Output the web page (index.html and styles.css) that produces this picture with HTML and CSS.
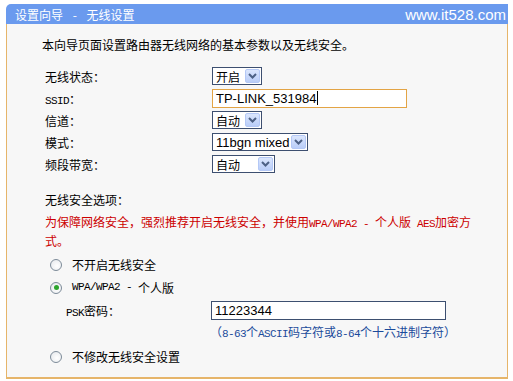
FILE: index.html
```html
<!DOCTYPE html>
<html>

<head>
    <meta charset="utf-8">
    <title>设置向导 - 无线设置</title>
    <link rel="stylesheet" href="styles.css">
</head>

<body>
    <div class="wrap">
        <div class="bar">
            <span class="title">设置向导 - 无线设置</span>
            <span class="site">www.it528.com</span>
        </div>

        <div class="panel">
            <p class="intro">本向导页面设置路由器无线网络的基本参数以及无线安全。</p>

            <div class="form">
                <div class="row">
                    <span class="label">无线状态：</span>
                    <span class="select w-on"><span class="val">开启</span><span class="arrow"><svg width="9" height="6" viewBox="0 0 9 6"><path d="M1 1 L4.5 4.5 L8 1" fill="none" stroke="#4d6185" stroke-width="2"/></svg></span></span>
                </div>
                <div class="row">
                    <span class="label"><span class="en">SSID</span>：</span>
                    <span class="input ssid">TP-LINK_531984<span class="caret"></span></span>
                </div>
                <div class="row">
                    <span class="label">信道：</span>
                    <span class="select w-on"><span class="val">自动</span><span class="arrow"><svg width="9" height="6" viewBox="0 0 9 6"><path d="M1 1 L4.5 4.5 L8 1" fill="none" stroke="#4d6185" stroke-width="2"/></svg></span></span>
                </div>
                <div class="row">
                    <span class="label">模式：</span>
                    <span class="select w-mode"><span class="val latin">11bgn mixed</span><span class="arrow"><svg width="9" height="6" viewBox="0 0 9 6"><path d="M1 1 L4.5 4.5 L8 1" fill="none" stroke="#4d6185" stroke-width="2"/></svg></span></span>
                </div>
                <div class="row">
                    <span class="label">频段带宽：</span>
                    <span class="select w-band"><span class="val">自动</span><span class="arrow"><svg width="9" height="6" viewBox="0 0 9 6"><path d="M1 1 L4.5 4.5 L8 1" fill="none" stroke="#4d6185" stroke-width="2"/></svg></span></span>
                </div>
            </div>

            <div class="sec-title">无线安全选项：</div>
            <div class="warn">为保障网络安全，强烈推荐开启无线安全，并使用<span class="en">WPA/WPA2 - </span>个人版<span class="en"> AES</span>加密方<br>式。</div>

            <div class="opt first"><span class="radio"></span>不开启无线安全</div>
            <div class="opt"><span class="radio on"></span><span class="en">WPA/WPA2 - </span>个人版</div>
            <div class="psk">
                <span class="psk-label"><span class="en">PSK</span>密码：</span>
                <span class="input pwd">11223344</span>
            </div>
            <div class="hint">（<span class="en">8-63</span>个<span class="en">ASCII</span>码字符或<span class="en">8-64</span>个十六进制字符）</div>
            <div class="opt last"><span class="radio"></span>不修改无线安全设置</div>
        </div>
    </div>
</body>

</html>
```

FILE: styles.css
```css
body {
    margin: 0;
    background: #ffffff;
    font-family: "Noto Sans CJK SC", sans-serif;
    font-size: 12px;
    color: #000000;
}

.wrap {
    width: 502px;
    margin: 4px 0 0 6px;
}

.bar {
    height: 20px;
    background: #6a9aee;
    border-radius: 5px 0 0 0;
    display: flex;
    align-items: center;
    justify-content: space-between;
    padding: 0 2px 0 9px;
    color: #ffffff;
}

.bar>.title {
    font-size: 12px;
    word-spacing: 7px;
}

.bar>.site {
    font-family: "Liberation Sans", sans-serif;
    font-size: 15px;
}

.panel {
    box-sizing: border-box;
    height: 355px;
    background: #f7f7f7;
    border: 1px solid #e6b56a;
    border-top: none;
    border-bottom-width: 2px;
    padding: 13px 0 0 38px;
}

.en {
    font-family: "Liberation Mono", monospace;
    font-size: 11px;
    letter-spacing: -0.6px;
    line-height: 1;
    white-space: pre;
}

.intro {
    margin: 0 0 0 -3px;
    line-height: 16px;
}

.form {
    margin-top: 12px;
}

.row {
    display: flex;
    align-items: center;
    height: 22px;
}

.row>.label {
    width: 167px;
}

.select {
    box-sizing: border-box;
    display: flex;
    align-items: center;
    justify-content: space-between;
    height: 18px;
    border: 1px solid #3d4f70;
    background: #ffffff;
    padding: 0 1px 0 3px;
}

.select.w-on {
    width: 50px;
}

.select.w-mode {
    width: 96px;
}

.select.w-band {
    width: 63px;
}

.latin {
    font-family: "Liberation Sans", sans-serif;
    font-size: 13px;
}

.arrow {
    box-sizing: border-box;
    width: 15px;
    height: 14px;
    display: flex;
    align-items: center;
    justify-content: center;
    background: linear-gradient(#dbe6fd, #b9cdf8);
    border: 1px solid #b4c8f6;
    border-radius: 2px;
}

.input {
    box-sizing: border-box;
    display: flex;
    align-items: center;
    height: 19px;
    background: #ffffff;
    border: 1px solid #3d4f70;
    padding-left: 3px;
    font-family: "Liberation Sans", sans-serif;
    font-size: 13px;
}

.input.ssid {
    width: 195px;
    border: 1px solid #e3a445;
}

.caret {
    width: 1px;
    height: 14px;
    background: #000000;
    margin-left: 1px;
}

.sec-title {
    margin-top: 16px;
    line-height: 18px;
}

.warn {
    height: 38px;
    margin-top: 3px;
    line-height: 19px;
    color: #cc0000;
}

.opt {
    display: flex;
    align-items: center;
    height: 23px;
    padding-left: 5px;
}

.opt.first {
    margin-top: 3px;
}

.opt.last {
    margin-top: 5px;
}

.radio {
    box-sizing: border-box;
    width: 12px;
    height: 12px;
    border-radius: 50%;
    border: 1px solid #7d8b99;
    background: radial-gradient(circle at 60% 60%, #ffffff, #e3e6ea);
    margin-right: 10px;
    display: flex;
    align-items: center;
    justify-content: center;
}

.radio.on::after {
    content: "";
    width: 5px;
    height: 5px;
    border-radius: 50%;
    background: #2da52d;
}

.psk {
    display: flex;
    align-items: center;
    height: 22px;
    padding-left: 21px;
}

.psk-label {
    width: 145px;
}

.input.pwd {
    width: 235px;
}

.hint {
    height: 16px;
    margin: 3px 0 0 165px;
    line-height: 16px;
    color: #1b4b9b;
}
```
